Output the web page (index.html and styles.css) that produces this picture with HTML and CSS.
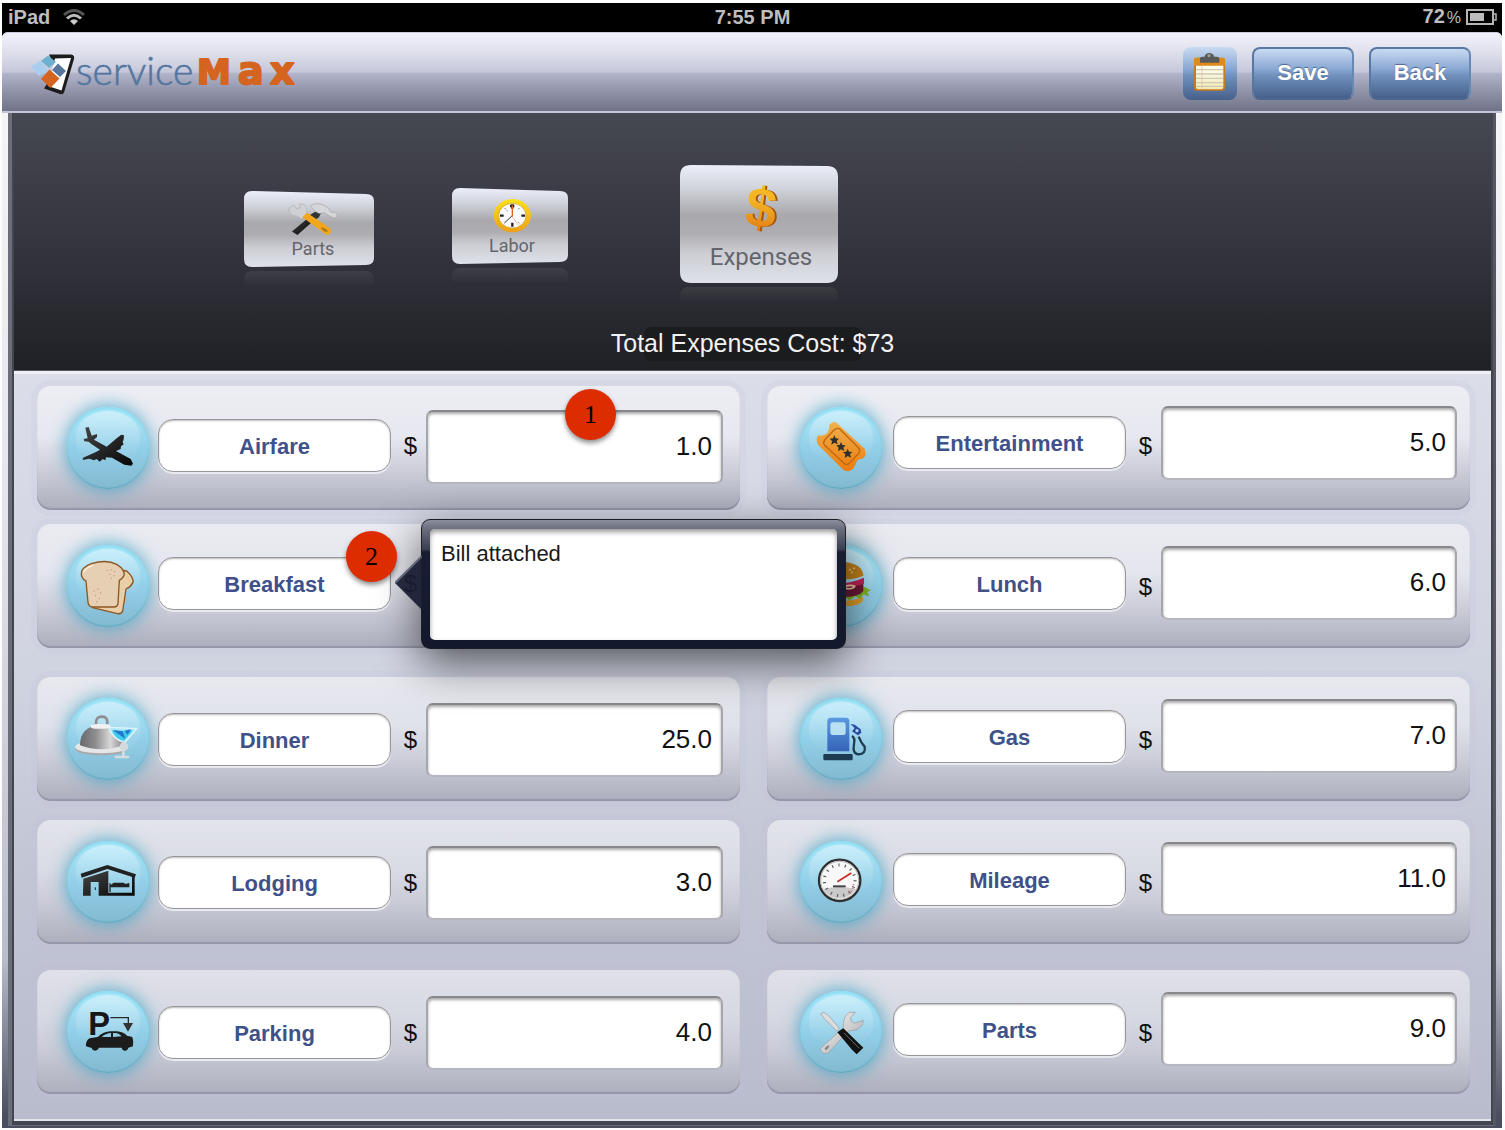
FILE: index.html
```html
<!DOCTYPE html>
<html lang="en">
<head>
<meta charset="utf-8">
<title>ServiceMax – Expenses</title>
<meta name="viewport" content="width=device-width, initial-scale=1">
<link rel="stylesheet" href="styles.css">
</head>
<body>
<svg class="defs" aria-hidden="true">
  <defs>
    <linearGradient id="metal" x1="0" y1="0" x2="0" y2="1">
      <stop offset="0" stop-color="#eceffa"/><stop offset=".2" stop-color="#d0d3da"/><stop offset=".42" stop-color="#a9a9ad"/><stop offset=".58" stop-color="#aeaeb2"/><stop offset=".75" stop-color="#cdced4"/><stop offset="1" stop-color="#dfe2ea"/>
    </linearGradient>
    <linearGradient id="gold" x1="0" y1="0" x2="0" y2="1">
      <stop offset="0" stop-color="#f6bd1c"/><stop offset=".4" stop-color="#f3b325"/><stop offset="1" stop-color="#dd6f10"/>
    </linearGradient>
    <linearGradient id="rim" x1="0" y1="0" x2="0" y2="1">
      <stop offset="0" stop-color="#fbe21a"/><stop offset="1" stop-color="#ee9e18"/>
    </linearGradient>
    <linearGradient id="black" x1="0" y1="0" x2="1" y2="1">
      <stop offset="0" stop-color="#454545"/><stop offset="1" stop-color="#050505"/>
    </linearGradient>
    <linearGradient id="ticket" x1="0" y1="0" x2="0" y2="1">
      <stop offset="0" stop-color="#f0b050"/><stop offset="1" stop-color="#ea7d0c"/>
    </linearGradient>
    <linearGradient id="pump" x1="0" y1="0" x2="0" y2="1">
      <stop offset="0" stop-color="#5a9ae0"/><stop offset="1" stop-color="#3563b8"/>
    </linearGradient>
    <linearGradient id="silver" x1="0" y1="0" x2="1" y2="1">
      <stop offset="0" stop-color="#fafafa"/><stop offset="1" stop-color="#a5a5a8"/>
    </linearGradient>
    <linearGradient id="dome" x1="0" y1="0" x2="1" y2="0">
      <stop offset="0" stop-color="#69696c"/><stop offset=".35" stop-color="#8c8c8e"/><stop offset=".7" stop-color="#d8d8d8"/><stop offset="1" stop-color="#8a8a8a"/>
    </linearGradient>
    <linearGradient id="paper" x1="0" y1="0" x2="0" y2="1">
      <stop offset="0" stop-color="#fffdf2"/><stop offset="1" stop-color="#f3e9b4"/>
    </linearGradient>
  </defs>
</svg>

<div class="device">
  <div class="status">
    <div class="status-left">
      <span>iPad</span>
      <svg width="24" height="18" viewBox="0 0 24 18" fill="none" stroke-width="3">
        <path d="M2 7Q12-2 22 7" stroke="#555"/><path d="M5 10.500Q12 4 19 10.500" stroke="#bbb"/><path d="M12 17L8 13Q12 9.500 16 13Z" fill="#ccc"/>
      </svg>
    </div>
    <span class="status-time">7:55 PM</span>
    <div class="status-right">
      <span>72<span class="percent">%</span></span>
      <svg width="31" height="16" viewBox="0 0 31 16">
        <rect x="1" y="1" width="26" height="14" fill="none" stroke="#b5b5b5" stroke-width="2"/><rect x="4" y="4" width="14" height="8" fill="#bcbcbc"/><path d="M28 5h2v6h-2" fill="none" stroke="#b5b5b5" stroke-width="1.500"/>
      </svg>
    </div>
  </div>

  <header class="toolbar">
    <svg class="logo" width="290" height="70" viewBox="30 38 290 70" role="img" aria-label="ServiceMax">
      <path d="M49 54.500L71 54.500Q75 55 74 59L64.500 91Q63.500 95 60 94L44 88.500L56 70Z" fill="#1d1b1d"/>
      <path d="M55 58.500L71 58L61.500 90.500L48 86Z" fill="#fff"/>
      <path d="M40.500 60.500L31 66.500L39 76L48 71Z" fill="#a9cdee"/>
      <path d="M48 55.500L41 61L49 68L56 62Z" fill="#6cb0cf"/>
      <path d="M58 63.500L52 70L60 77L66 71Z" fill="#57779f"/>
      <path d="M49.500 69.500L41 79L50.500 88L59.500 78.500Z" fill="#d4641f"/>
      <text class="logo-service" x="76" y="85">service</text>
      <g class="logo-max"><text x="197" y="84" class="logo-m">M</text><text x="238" y="84">a</text><text x="270" y="84">x</text></g>
    </svg>
    <div class="actions">
      <button class="btn btn-notes" type="button" aria-label="Notes">
        <svg width="34" height="42" viewBox="105 160 102 126">
          <rect x="108" y="177" width="93" height="99" rx="8" fill="#c77b1a"/>
          <rect x="108" y="177" width="93" height="26" rx="8" fill="#e08a1c"/>
          <path d="M114 201h82v64q0 7-7 7h-68q-7 0-7-7z" fill="url(#paper)"/>
          <path d="M115 213h80M115 226h80M115 239h80M115 252h80M115 263h80" stroke="#c9c9b8" stroke-width="4"/>
          <path d="M132 202v68" stroke="#eab6a0" stroke-width="2"/>
          <path d="M126 192v-13q0-5 8-5h6q2-11 14-11t14 11h8q8 0 8 5v13z" fill="#58595b"/><circle cx="153" cy="171" r="5" fill="#999"/>
        </svg>
      </button>
      <button class="btn" type="button">Save</button>
      <button class="btn" type="button">Back</button>
    </div>
  </header>

  <main class="frame">
    <section class="hero">
      <nav class="tabs" aria-label="Work order sections">
        <button class="tab tab-parts" type="button">
          <svg class="tab-face" viewBox="0 0 130 76" preserveAspectRatio="none"><path d="M8 0L122 3Q130 3 130 10V67Q130 74 122 74L8 76Q0 76 0 68V8Q0 0 8 0Z" fill="url(#metal)"/></svg>
          <svg class="tab-icon" width="52" height="36" viewBox="208 152 150 104">
            <path d="M222 240L275 196L287 207L238 250Z" fill="url(#black)"/>
            <path d="M268 196L288 184L306 187L300 200L284 208Z" fill="#333"/>
            <path d="M275 166Q300 150 328 172L334 184L350 186Q358 196 344 202L332 196L316 186L300 188L286 178Z" fill="#d5d6d9" stroke="#999" stroke-width="1.500"/>
            <path d="M214 172L228 164L236 176L246 172L244 160Q266 160 266 178Q262 190 262 196L250 204Q238 192 226 194Q212 186 214 172Z" fill="#d0d1d4" stroke="#aaa" stroke-width="1.500"/>
            <path d="M252 198L266 186L334 232Q338 250 322 250Z" fill="#f2a71b"/><path d="M306 228Q322 230 326 240Q312 244 306 228Z" fill="#a9792a"/>
          </svg>
          <span>Parts</span>
        </button>
        <button class="tab tab-labor" type="button">
          <svg class="tab-face" viewBox="0 0 116 76" preserveAspectRatio="none"><path d="M8 0L108 3Q116 3 116 10V67Q116 74 108 74L8 76Q0 76 0 68V8Q0 0 8 0Z" fill="url(#metal)"/></svg>
          <svg class="tab-icon" width="40" height="36" viewBox="814 146 120 108">
            <ellipse cx="875" cy="199" rx="56" ry="50" fill="url(#rim)"/><ellipse cx="875" cy="199" rx="41" ry="37" fill="#fafafa" stroke="#c8981a" stroke-width="2"/>
            <path d="M868 170h13M875 165v13M875 220v12M838 199h11M902 199h11" stroke="#222" stroke-width="7"/>
            <path d="M852 176l3 4M896 176l-3 4M858 183l3 3M896 222l-3-3" stroke="#777" stroke-width="3"/>
            <path d="M875 199L851 221" stroke="#333" stroke-width="3"/><path d="M875 168V202" stroke="#e2622a" stroke-width="4"/><path d="M873 199L894 228" stroke="#e29a78" stroke-width="2"/>
          </svg>
          <span>Labor</span>
        </button>
        <button class="tab tab-active" type="button" aria-current="page">
          <svg class="tab-face" viewBox="0 0 158 118" preserveAspectRatio="none"><path d="M11 0L147 1Q158 1 158 12V107Q158 118 147 118H11Q0 118 0 107V11Q0 0 11 0Z" fill="url(#metal)"/></svg>
          <svg class="tab-icon" width="48" height="56" viewBox="0 0 48 56"><g class="dollar-sign" transform="rotate(7 24 28)"><text x="26" y="47" fill="#a5520c">$</text><text x="24" y="47" fill="url(#gold)">$</text></g></svg>
          <span>Expenses</span>
        </button>
      </nav>
      <p class="total">Total Expenses Cost: $73</p>
    </section>

    <form class="expenses">
      <div class="card card-high">
        <span class="orb"><svg viewBox="203 110 246 246"><path d="M258 172L268 170L277 196L293 191L293 200L284 208L322 229L352 204L366 193L374 195L373 207L370 216L373 222L365 228L364 236L350 242L394 266L401 280L396 286L375 283L338 262L320 261L318 270L310 266L301 274L292 266L284 270L270 265L250 269L251 262L290 245L302 238L276 221L268 214L255 213L253 206L265 204Z" fill="url(#black)"/></svg></span>
        <div class="name"><label for="airfare">Airfare</label></div>
        <span class="currency">$</span>
        <div class="amount"><input id="airfare" type="text" inputmode="decimal" value="1.0"><span class="step step-amount">1</span></div>
      </div>
      <div class="card card-right card-high">
        <span class="orb"><svg viewBox="152 107 246 246"><path d="M240 160Q256 144 268 160L346 232Q354 252 340 262Q322 262 320 276Q312 298 296 300Q286 300 280 294L206 220Q198 206 206 192Q224 196 234 184Q242 172 240 160Z" fill="url(#ticket)"/><path d="M262 172Q268 170 272 174L328 230Q334 238 328 246L300 276Q292 284 284 276L226 222Q220 214 226 206L254 176Z" fill="none" stroke="#c2660e" stroke-width="4"/><g fill="#333028"><path d="M255 192l4 9 10 1-7 7 3 10-10-5-9 6 2-11-7-7 10-1z"/><path d="M275 212l4 9 10 1-7 7 3 10-10-5-9 6 2-11-7-7 10-1z"/><path d="M295 232l4 9 10 1-7 7 3 10-10-5-9 6 2-11-7-7 10-1z"/></g></svg></span>
        <div class="name"><label for="entertainment">Entertainment</label></div>
        <span class="currency">$</span>
        <div class="amount"><input id="entertainment" type="text" inputmode="decimal" value="5.0"></div>
      </div>

      <div class="card card-high">
        <span class="orb"><svg viewBox="203 524 246 246" stroke="#8f5622" stroke-width="4" stroke-linejoin="round"><path d="M340 596L382 602Q404 622 401 636Q394 650 380 656L370 722Q366 732 354 730L280 712Z" fill="#e9cfa8"/><path d="M246 612Q244 592 276 580Q322 566 352 582Q378 598 374 616Q370 624 360 630L356 700Q354 710 344 710L278 710Q268 708 266 696L260 632Q248 626 246 612Z" fill="#e6cfb2"/><path d="M252 606Q262 590 280 586" fill="none" stroke="#fff3df"/><g stroke="none" fill="#b99770"><circle cx="324" cy="600" r="2"/><circle cx="336" cy="598" r="2"/><circle cx="346" cy="604" r="2"/><circle cx="332" cy="612" r="2"/><circle cx="344" cy="616" r="2"/><circle cx="336" cy="624" r="2"/><circle cx="284" cy="662" r="2"/><circle cx="296" cy="656" r="2"/><circle cx="304" cy="668" r="2"/><circle cx="288" cy="676" r="2"/><circle cx="300" cy="684" r="2"/><circle cx="292" cy="694" r="2"/></g></svg></span>
        <div class="name"><label for="breakfast">Breakfast</label><span class="step step-name">2</span></div>
        <span class="currency">$</span>
        <div class="amount"><input id="breakfast" type="text" inputmode="decimal" value="2.0"></div>
        <div class="popover">
          <svg class="popover-arrow" width="27" height="54" viewBox="0 0 27 54"><path d="M27 0L0 27L27 54Z" fill="#191d33"/><path d="M27 0L0 27" stroke="#5c6070" stroke-width="2"/></svg>
          <textarea aria-label="Breakfast note">Bill attached</textarea>
        </div>
      </div>
      <div class="card card-right">
        <span class="orb"><svg viewBox="152 530 246 246"><path d="M218 690Q280 708 342 686Q344 704 320 710Q280 718 238 708Q220 702 218 690Z" fill="#dc9a28"/><path d="M212 676L230 690L246 682L262 696L284 686L300 696L318 684L332 692L342 678L360 684L354 672L364 666L346 656Z" fill="#7fae22"/><path d="M218 646H342V668Q330 686 280 686Q230 686 218 668Z" fill="#6b1836"/><path d="M214 640Q280 656 344 628V646Q300 662 214 656Z" fill="#bd2356"/><path d="M270 660Q300 646 316 654Q310 664 290 660" fill="none" stroke="#f0cda0" stroke-width="5"/><path d="M216 624Q218 582 284 580Q340 586 342 622Q290 644 216 624Z" fill="#c0801b"/><circle cx="302" cy="604" r="2.500" fill="#ffe9b0"/><circle cx="314" cy="600" r="2.500" fill="#ffe9b0"/><circle cx="308" cy="612" r="2.500" fill="#ffe9b0"/></svg></span>
        <div class="name"><label for="lunch">Lunch</label></div>
        <span class="currency">$</span>
        <div class="amount"><input id="lunch" type="text" inputmode="decimal" value="6.0"></div>
      </div>

      <div class="card">
        <span class="orb"><svg viewBox="203 116 246 246"><path d="M290 194Q288 172 308 172Q326 172 324 194" fill="none" stroke="#8d8d90" stroke-width="8"/><ellipse cx="306" cy="268" rx="79" ry="20" fill="#a9a9ad"/><ellipse cx="306" cy="263" rx="79" ry="19" fill="#e6e6e8"/><path d="M242 258Q242 200 306 196Q366 200 372 258Q306 282 242 258Z" fill="url(#dome)"/><path d="M274 198Q306 190 334 198Q332 210 306 208Q280 210 274 204Z" fill="#f1f1f2"/><path d="M328 204L412 208L376 250Q340 240 328 204Z" fill="#a6e6f5" stroke="#dff5fb" stroke-width="4"/><path d="M338 214L400 214L374 244Q350 240 338 214Z" fill="#3ccbe8"/><path d="M340 212L370 216L378 238ZM376 214L396 210L384 226Z" fill="#2474cf"/><path d="M372 250V290M350 293H386" stroke="#d8dbdf" stroke-width="8" stroke-linecap="round"/><circle cx="374" cy="262" r="13" fill="#d5d8dc"/></svg></span>
        <div class="name"><label for="dinner">Dinner</label></div>
        <span class="currency">$</span>
        <div class="amount"><input id="dinner" type="text" inputmode="decimal" value="25.0"></div>
      </div>
      <div class="card card-right">
        <span class="orb"><svg viewBox="152 110 246 246"><path d="M234 270V180Q234 169 244 169H290Q300 169 300 180V270Z" fill="url(#pump)"/><rect x="243" y="183" width="46" height="38" rx="7" fill="#b7e0f3"/><rect x="222" y="278" width="88" height="19" rx="4" fill="#1d3a50"/><path d="M303 188L316 190L334 204L336 214L326 222L308 210L316 200Z" fill="#2848a8"/><circle cx="323" cy="208" r="5" fill="#a7d6ee"/><path d="M308 224Q318 230 314 248Q308 278 328 279Q350 278 346 256Q336 246 328 226" fill="none" stroke="#203c50" stroke-width="7"/></svg></span>
        <div class="name"><label for="gas">Gas</label></div>
        <span class="currency">$</span>
        <div class="amount"><input id="gas" type="text" inputmode="decimal" value="7.0"></div>
      </div>

      <div class="card">
        <span class="orb"><svg viewBox="203 545 246 246"><path d="M244 643L324 617L410 645L406 655L324 629L247 655Z" fill="#222"/><path d="M252 658L327 634V700H398V648L406 650V709H298V668H274V709H251Z" fill="url(#black)"/><path d="M332 672V698M332 682H388V672M336 678H380L372 672H344Z" fill="#222" stroke="#222" stroke-width="4"/><path d="M288 684v8" stroke="#222" stroke-width="3"/></svg></span>
        <div class="name"><label for="lodging">Lodging</label></div>
        <span class="currency">$</span>
        <div class="amount"><input id="lodging" type="text" inputmode="decimal" value="3.0"></div>
      </div>
      <div class="card card-right">
        <span class="orb"><svg viewBox="152 542 246 246"><circle cx="271" cy="660" r="62" fill="#f8f8f8" stroke="#2f2f2f" stroke-width="7"/><circle cx="271" cy="660" r="57" fill="none" stroke="#b5b5b5" stroke-width="3"/><path d="M222 686Q270 674 320 686Q300 714 271 714Q240 714 222 686Z" fill="#c9c9c9"/><circle cx="271" cy="660" r="46" fill="none" stroke="#555" stroke-width="9" stroke-dasharray="3 15" pathLength="270"/><path d="M312 672Q312 688 298 700" fill="none" stroke="#d66" stroke-width="5" stroke-dasharray="3 7"/><path d="M264 664L306 638" stroke="#c52b22" stroke-width="5"/><path d="M251 678h38" stroke="#444" stroke-width="6"/></svg></span>
        <div class="name"><label for="mileage">Mileage</label></div>
        <span class="currency">$</span>
        <div class="amount"><input id="mileage" type="text" inputmode="decimal" value="11.0"></div>
      </div>

      <div class="card">
        <span class="orb"><svg viewBox="200 118 246 246"><text class="parking-letter" x="264" y="251">P</text><path d="M330 198H384V216" fill="none" stroke="#2a2a2a" stroke-width="4"/><path d="M368 214H398L383 240Z" fill="#333"/><path d="M257 284Q256 266 268 260L292 256Q310 240 330 239H350Q368 240 380 252L396 256Q400 266 398 284L384 288Q382 297 374 297Q366 297 364 288H296Q292 297 284 297Q276 297 274 289Z" fill="#1c1c1c"/><path d="M304 256Q316 245 332 244V256ZM338 244H348Q358 246 364 254L338 256Z" fill="#8ecbe2"/></svg></span>
        <div class="name"><label for="parking">Parking</label></div>
        <span class="currency">$</span>
        <div class="amount"><input id="parking" type="text" inputmode="decimal" value="4.0"></div>
      </div>
      <div class="card card-right">
        <span class="orb"><svg viewBox="152 120 246 246"><path d="M214 188L224 184L238 194L270 232L262 240L226 204Z" fill="#dcdddf" stroke="#98999c" stroke-width="2"/><path d="M214 292L282 230Q280 196 300 184L318 184L304 200Q304 216 318 216L342 208Q340 228 322 236L298 240L236 306Q226 312 216 302Z" fill="url(#silver)" stroke="#999" stroke-width="2"/><path d="M226 292Q230 284 240 282Q240 294 228 298Z" fill="#86888c"/><path d="M264 244L282 232L342 290L322 310L308 296Z" fill="#121212"/><path d="M284 246L330 292" stroke="#666" stroke-width="3"/></svg></span>
        <div class="name"><label for="parts">Parts</label></div>
        <span class="currency">$</span>
        <div class="amount"><input id="parts" type="text" inputmode="decimal" value="9.0"></div>
      </div>
    </form>
  </main>
</div>
</body>
</html>
```

FILE: styles.css
```css
* {
  box-sizing: border-box;
}

body {
  margin: 0;
  padding: 3px 3px 2px 2px;
  background: #fdfdfe;
  color: #111;
  font-family: "Liberation Sans", Arial, Helvetica, sans-serif;
}

button,
input,
textarea {
  font-family: inherit;
}

.defs {
  position: absolute;
  width: 0;
  height: 0;
}

.device {
  background: linear-gradient(#f4f4f7 10%, #e4e5eb 45%, #b9bccb 85%, #4a4e5e 99%);
}

/* Status bar */
.status {
  display: grid;
  grid-template-columns: 1fr auto 1fr;
  align-items: center;
  height: 29px;
  padding: 0 5px 2px 6px;
  background: #000;
  color: #bebebe;
  font-size: 20px;
  font-weight: 700;
  line-height: 26px;
}

.status-left,
.status-right {
  display: flex;
  align-items: center;
  gap: 12px;
}

.status-right {
  justify-content: flex-end;
  gap: 5px;
}

.percent {
  margin-left: 2px;
  font-size: 16px;
  font-weight: 400;
}

/* Toolbar */
.toolbar {
  display: flex;
  align-items: center;
  justify-content: space-between;
  height: 81px;
  padding: 2px 31px 0 28px;
  border-top: 1px solid #c9cadb;
  border-bottom: 2px solid #c3c6d9;
  border-radius: 6px 6px 0 0;
  background: linear-gradient(#f1f2fa, #dcdde9 28%, #c5c7da 50%, #b1b4ca 52%, #8f92a7 76%, #717287);
  box-shadow: 0 -6px 0 #000;
}

.logo-service {
  fill: #54769f;
  stroke: #54769f;
  stroke-width: .6px;
  font-family: Lato, "Open Sans", sans-serif;
  font-size: 39px;
  font-weight: 300;
}

.logo-max {
  fill: #d4641f;
  stroke: #d4641f;
  stroke-width: 2px;
  stroke-linejoin: round;
  font-family: "DejaVu Sans", sans-serif;
  font-size: 38px;
  font-weight: 700;
}

.logo-m {
  font-size: 34px;
}

.actions {
  display: flex;
  align-items: center;
  gap: 15px;
}

.btn {
  width: 102px;
  height: 53px;
  padding: 0;
  border: 2px solid #5878a3;
  border-right-color: #6888b4;
  border-bottom-color: #4b6690;
  border-radius: 8px;
  background: linear-gradient(#c9dbf2, #8ba9d3 40%, #6f8fbc 55%, #46608a);
  color: #fff;
  font-size: 22px;
  font-weight: 700;
  text-shadow: 0 -1px 1px #4a6690;
}

.btn-notes {
  width: 54px;
  border: 0;
}

.btn-notes svg {
  display: block;
  margin: 0 auto;
}

/* Content frame */
.frame {
  margin: 0 6px;
  padding: 0 2px 4px;
  border: solid #6b6d79;
  border-width: 0 3px 1px 4px;
  border-right-color: #565762;
  background: #43454f;
}

.device::after {
  content: "";
  display: block;
  height: 2px;
}

.hero {
  padding: 52px 0 9px;
  border-bottom: 1px solid #55565e;
  background: linear-gradient(#464852, #34353e 50%, #202126);
}

.tabs {
  display: flex;
  align-items: center;
  gap: 78px;
  height: 118px;
  padding-left: 230px;
}

.tab {
  position: relative;
  display: flex;
  flex-direction: column;
  align-items: center;
  width: 116px;
  height: 76px;
  margin: 4px 0 0;
  padding: 10px 0 0 4px;
  border: 0;
  background: none;
  color: #64656c;
  font-family: Roboto, sans-serif;
  font-size: 18px;
  line-height: 24px;
}

.tab-parts {
  width: 130px;
  margin-top: 10px;
  padding-left: 8px;
}

.tab-face {
  position: absolute;
  inset: 0;
  width: 100%;
  height: 100%;
}

.tab::after {
  content: "";
  position: absolute;
  top: 100%;
  left: 0;
  right: 0;
  height: 16px;
  margin-top: 4px;
  border-radius: 8px 8px 0 0;
  background: linear-gradient(rgba(255, 255, 255, .07), transparent);
}

.tab-icon,
.tab span {
  position: relative;
}

.tab-active {
  width: 158px;
  height: 118px;
  margin: 0 0 0 34px;
  padding-top: 15px;
  font-size: 24px;
  line-height: 42px;
}

.dollar-sign {
  font-family: "Liberation Sans", Arial, sans-serif;
  font-size: 56px;
  font-weight: 700;
  text-anchor: middle;
}

.total {
  display: flex;
  align-items: center;
  justify-content: center;
  width: 218px;
  height: 34px;
  margin: 44px auto 0;
  padding-bottom: 2px;
  border-radius: 8px;
  background: #1b1c1d;
  color: #f2f2f2;
  font-size: 25px;
  white-space: nowrap;
}

/* Expense cards */
.expenses {
  display: grid;
  grid-template-columns: 1fr 1fr;
  grid-template-rows: 138px 153px 143px 150px auto;
  align-items: start;
  column-gap: 27px;
  padding: 12px 21px 25px 23px;
  border-top: 3px solid #f0f1f7;
  border-bottom: 2px solid #e4e5ec;
  background: linear-gradient(#dbdde9, #d0d3e0 40%, #c3c6d5 65%, #b9bccd);
}

.card {
  --name-top: 36px;
  --currency-top: 48px;
  --amount-top: 26px;
  position: relative;
  display: flex;
  align-items: flex-start;
  height: 124px;
  padding: 0 17px 0 30px;
  border-radius: 14px;
  background: linear-gradient(rgba(255, 255, 255, .5), rgba(255, 255, 255, .38) 40%, rgba(205, 206, 217, .8) 65%, #afb1bf 97%);
  box-shadow: inset 0 -2px 1px #9496a9, 0 0 0 6px rgba(190, 192, 215, .16);
}

.card-right {
  --name-top: 33px;
  --amount-top: 22px;
  padding: 0 13px 0 33px;
}

.card-high {
  --name-top: 33px;
  --currency-top: 45px;
  --amount-top: 24px;
}

.card-right.card-high {
  --name-top: 30px;
  --amount-top: 20px;
}

.orb {
  flex: none;
  width: 82px;
  height: 82px;
  margin: 21px 9px 0 0;
  border-radius: 50%;
  background: linear-gradient(#b9ebfb, #92cfe8 50%, #82b9d0);
  box-shadow: inset 0 2px 3px #7fdcf2, inset 0 -1px 1px #5aa5bd, 0 0 16px 3px rgba(60, 165, 200, .7);
}

.orb::before {
  content: "";
  display: block;
  width: 64px;
  height: 50px;
  margin: 4px auto -54px;
  border-radius: 50% 50% 40% 40%;
  background: linear-gradient(rgba(255, 255, 255, .3), rgba(255, 255, 255, 0));
}

.card-right .orb {
  margin-right: 11px;
}

.orb svg {
  position: relative;
  display: block;
  width: 82px;
  height: 82px;
}

.parking-letter {
  fill: #171717;
  font-size: 98px;
  font-weight: 700;
}

.name {
  position: relative;
  flex: none;
  width: 233px;
  margin-top: var(--name-top);
}

.name label {
  display: block;
  height: 53px;
  border: 1px solid #97979b;
  border-radius: 15px;
  background: #fff;
  box-shadow: 0 2px 0 #e9eaf0, inset 0 1px 2px #bbb;
  color: #3f5189;
  font-size: 22px;
  font-weight: 700;
  line-height: 54px;
  text-align: center;
}

.currency {
  flex: none;
  width: 35px;
  margin-top: var(--currency-top);
  padding-left: 4px;
  font-size: 24px;
  line-height: 30px;
  text-align: center;
}

.amount {
  position: relative;
  flex: 1;
  margin-top: var(--amount-top);
}

.amount input {
  display: block;
  width: 100%;
  height: 74px;
  padding: 0 9px 2px;
  border: 2px solid #a6a7ad;
  border-top-color: #88888c;
  border-bottom-color: #b5b6bf;
  border-radius: 7px;
  background: #fff;
  box-shadow: inset 0 2px 3px #aaa;
  color: #111;
  font-size: 26px;
  text-align: right;
}

/* Numbered callouts */
.step {
  position: absolute;
  z-index: 4;
  width: 51px;
  height: 51px;
  border-radius: 50%;
  background: #dd2c00;
  box-shadow: 0 3px 5px rgba(0, 0, 0, .45);
  color: #000;
  font-family: "Liberation Serif", serif;
  font-size: 26px;
  line-height: 51px;
  text-align: center;
}

.step-amount {
  top: -21px;
  left: 139px;
}

.step-name {
  top: -26px;
  right: -6px;
}

/* Note popover */
.popover {
  position: absolute;
  z-index: 3;
  top: -5px;
  left: 384px;
  width: 425px;
  height: 130px;
  padding: 9px 8px 8px;
  border: 1px solid #1c1d25;
  border-radius: 9px;
  background: linear-gradient(#8b8e9b, #666a79 8%, #3a3e52 23%, #191d33 25%, #14182c);
  box-shadow: 0 14px 44px rgba(0, 0, 0, .6);
}

.popover-arrow {
  position: absolute;
  top: 36px;
  left: -27px;
  opacity: .93;
}

.popover textarea {
  display: block;
  width: 100%;
  height: 100%;
  padding: 11px 11px;
  border: 0;
  border-radius: 5px;
  background: #fff;
  box-shadow: inset 0 3px 5px #999;
  color: #1a1a1a;
  font-size: 22px;
  line-height: 28px;
  resize: none;
}
```
